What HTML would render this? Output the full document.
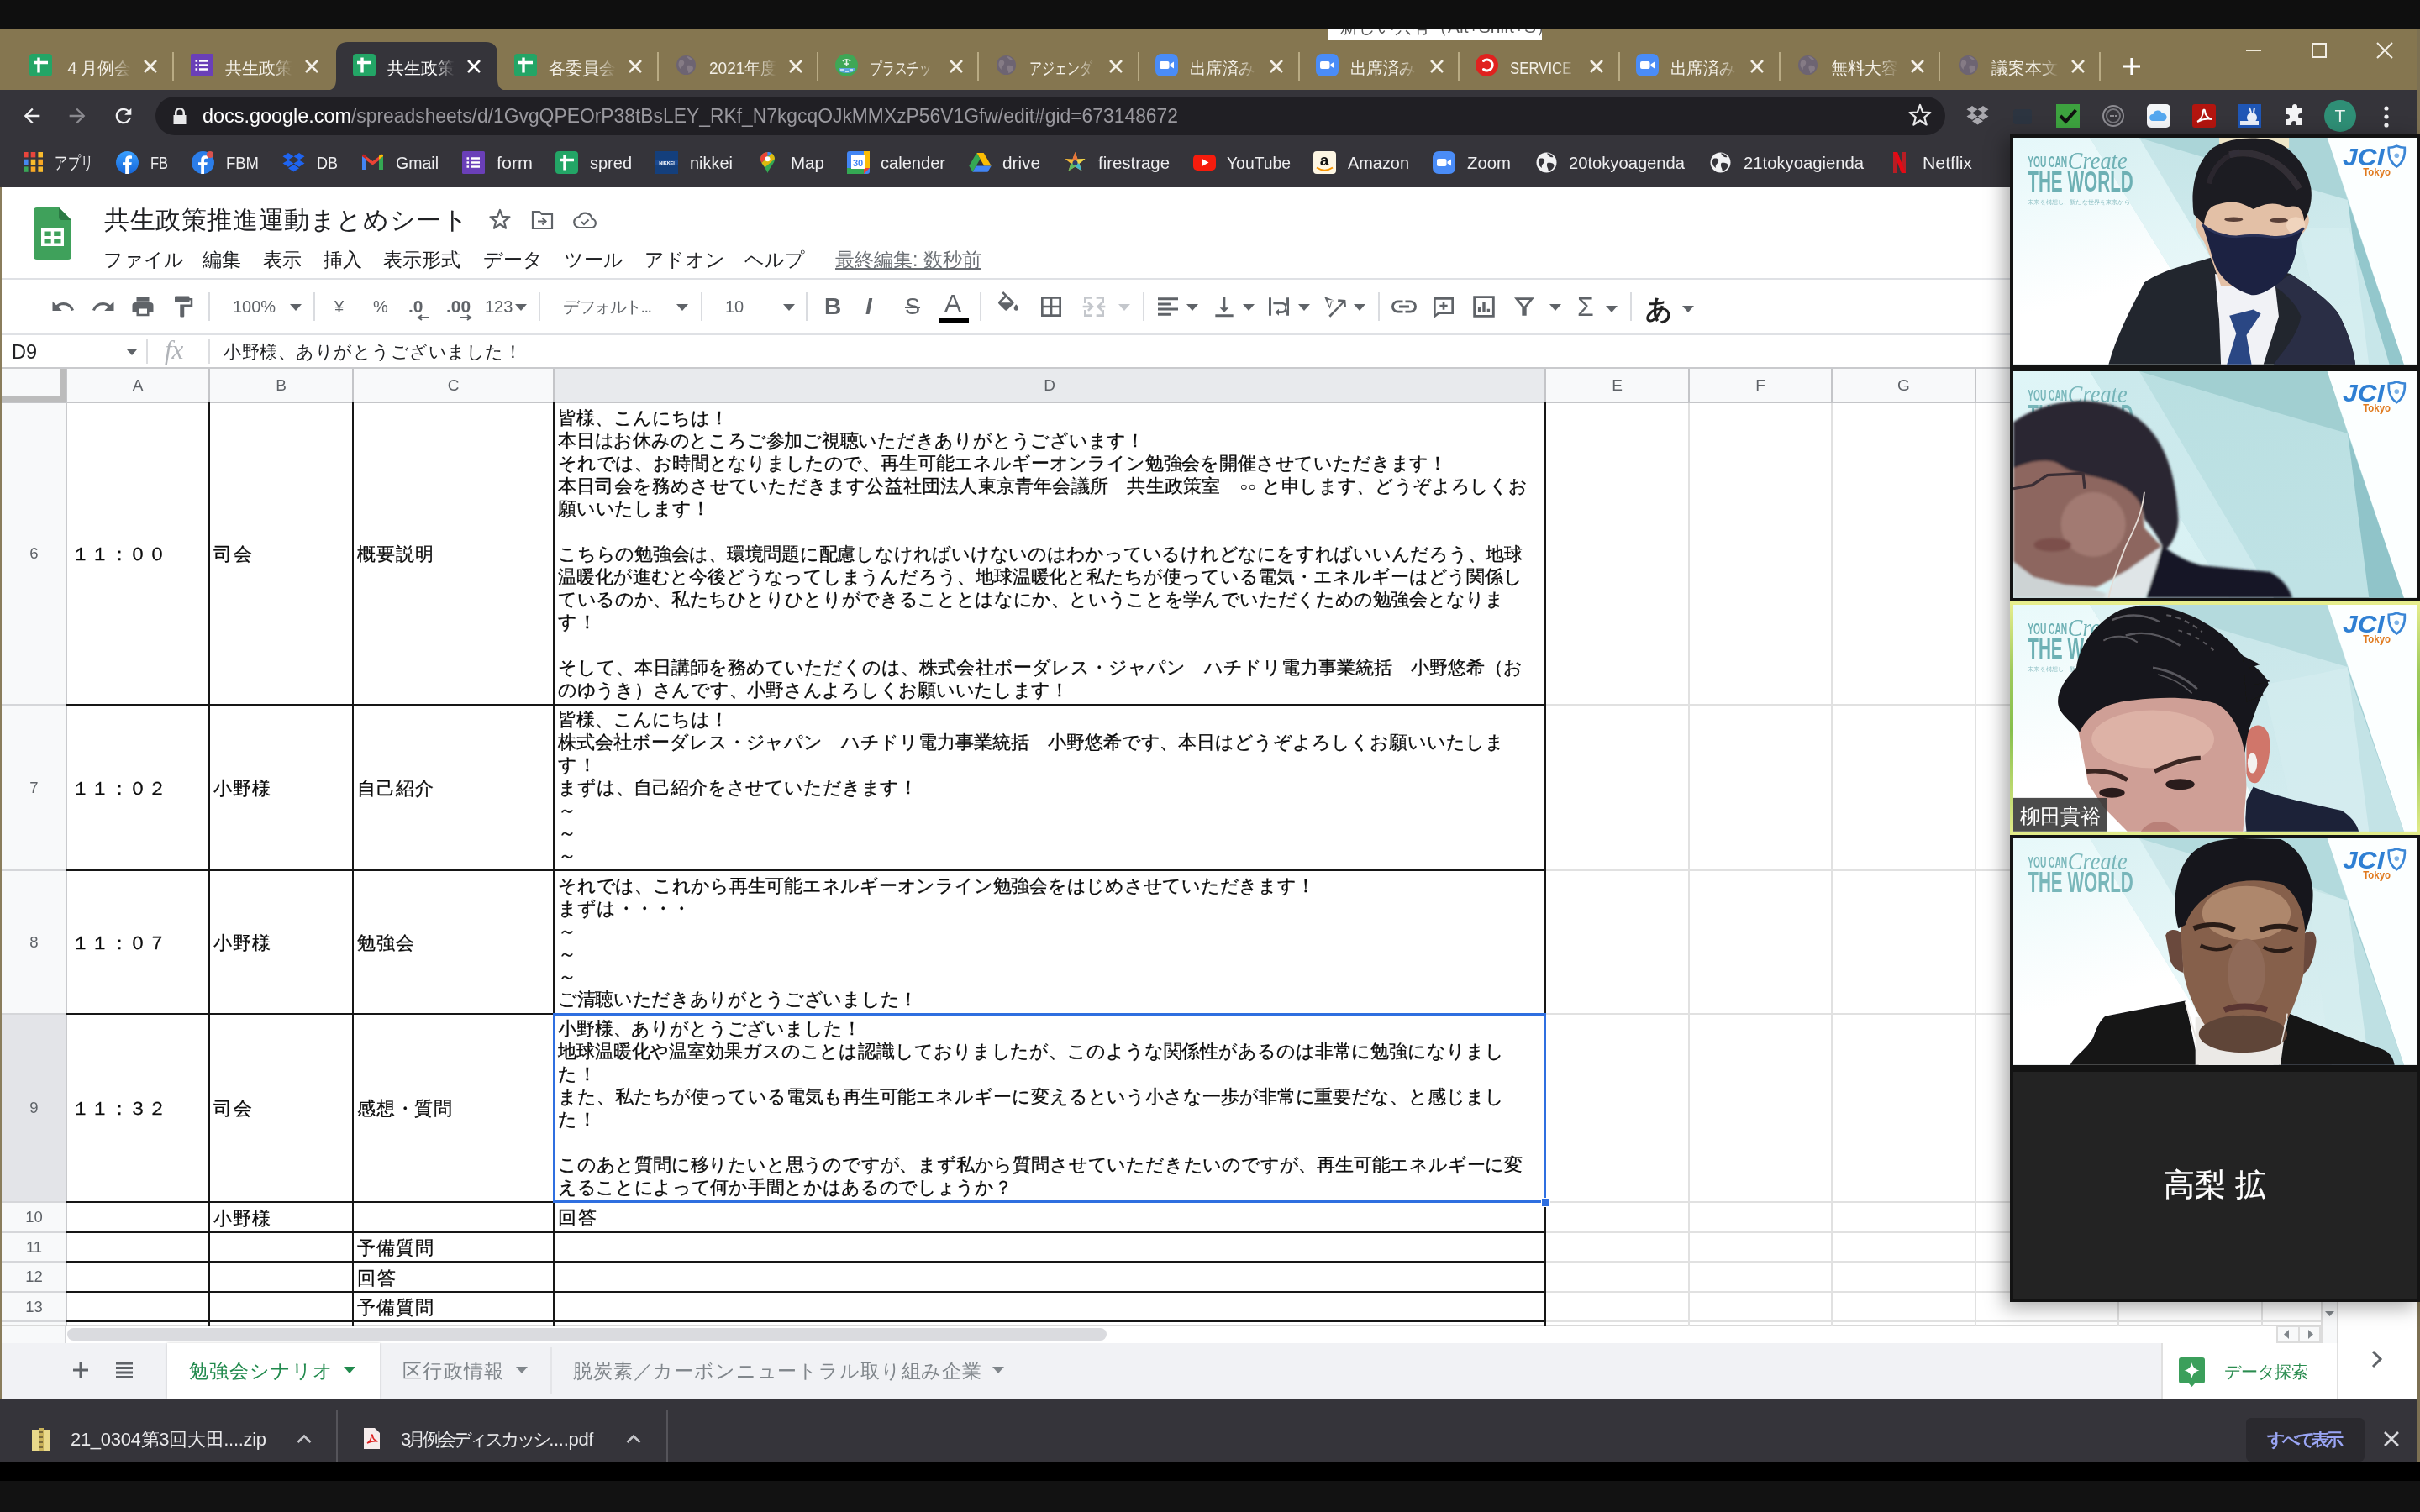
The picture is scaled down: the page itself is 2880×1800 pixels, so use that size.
<!DOCTYPE html>
<html lang="ja"><head><meta charset="utf-8"><title>共生政策推進運動まとめシート</title><style>
*{box-sizing:border-box;margin:0;padding:0}
html,body{width:2880px;height:1800px;overflow:hidden;background:#111}
body{font-family:"Liberation Sans",sans-serif;position:relative;color:#000}
div,span,svg{position:absolute}
.t{white-space:nowrap;line-height:1}
.tab{font-size:20px;color:#f3efe6;top:68px;height:26px;line-height:26px;overflow:hidden;width:80px;white-space:nowrap}
.bm{font-size:20.5px;color:#eeeef0;top:181px;height:26px;line-height:26px;white-space:nowrap}
.menu{font-size:23px;color:#202124;top:295px;height:28px;line-height:28px;white-space:nowrap}
.cell{font-size:22.5px;line-height:27px;color:#0c0c0c;-webkit-text-stroke:0.3px #0c0c0c;white-space:nowrap}
.rh{font-size:18.5px;color:#5f6368;text-align:center;left:2px;width:77px;height:24px;line-height:24px}
.ch{font-size:19px;color:#5f6368;text-align:center;top:447px;height:24px;line-height:24px}
.hl{background:#161616;height:2px}
.vl{background:#161616;width:2px}
.gh{background:#e1e1e1;height:2px}
.gv{background:#e1e1e1;width:2px}

.j{text-align:justify;text-align-last:justify;text-justify:inter-character;letter-spacing:-0.7px}
.sep{background:#dadce0;width:2px;top:348px;height:34px}
</style></head><body><div id="root" style="left:0;top:0;width:2880px;height:1800px;overflow:hidden;filter:blur(0.55px)">
<div style="left:0;top:0;width:2880px;height:34px;background:#0f0f0f"></div>
<div style="left:0;top:34px;width:2880px;height:73px;background:#857650"></div>
<div style="left:1581px;top:34px;width:254px;height:14px;background:#fff;overflow:hidden"><span class="t" style="left:14px;top:-13px;font-size:21px;color:#555">新しい共有（Alt+Shift+S）</span></div>
<div style="left:0;top:107px;width:2876px;height:116px;background:#35343a"></div>
<svg style="left:386px;top:50px" width="220" height="58" viewBox="0 0 220 58"><path d="M0 58 C10 58 14 54 14 44 L14 14 C14 5 19 0 28 0 L192 0 C201 0 206 5 206 14 L206 44 C206 54 210 58 220 58 Z" fill="#35343a"/></svg>
<svg style="left:35.0px;top:64.0px" width="27" height="27" viewBox="0 0 27 27" ><rect x="0" y="0" width="27" height="27" rx="4" fill="#23a566"/><path d="M5 10.5H22M11 4.5V22.5" stroke="#fff" stroke-width="3.4" fill="none"/></svg>
<div class="tab" style="left:76.0px;color:#f3efe6"><span style="left:0;top:0;transform-origin:0 50%;transform:scaleX(1)">４月例会</span><span style="right:0;top:0;width:24px;height:26px;background:linear-gradient(90deg,rgba(133,118,80,0),#857650)"></span></div>
<svg style="left:170.0px;top:70.0px" width="18" height="18" viewBox="0 0 18 18" ><path d="M2 2L16 16M16 2L2 16" stroke="#f3efe6" stroke-width="2.6" fill="none"/></svg>
<div style="left:204.5px;top:62px;width:2px;height:34px;background:#b9ab84"></div>
<svg style="left:227.4px;top:64.0px" width="27" height="27" viewBox="0 0 27 27" ><rect x="0" y="0" width="27" height="27" rx="1.5" fill="#6a3fb8"/><path d="M10 8.5h11M10 13.5h11M10 18.5h11" stroke="#fff" stroke-width="2.6"/><path d="M5.5 8.5h2.6M5.5 13.5h2.6M5.5 18.5h2.6" stroke="#fff" stroke-width="2.6"/></svg>
<div class="tab" style="left:268.4px;color:#f3efe6"><span style="left:0;top:0;transform-origin:0 50%;transform:scaleX(1)">共生政策</span><span style="right:0;top:0;width:24px;height:26px;background:linear-gradient(90deg,rgba(133,118,80,0),#857650)"></span></div>
<svg style="left:362.4px;top:70.0px" width="18" height="18" viewBox="0 0 18 18" ><path d="M2 2L16 16M16 2L2 16" stroke="#f3efe6" stroke-width="2.6" fill="none"/></svg>
<svg style="left:419.8px;top:64.0px" width="27" height="27" viewBox="0 0 27 27" ><rect x="0" y="0" width="27" height="27" rx="4" fill="#23a566"/><path d="M5 10.5H22M11 4.5V22.5" stroke="#fff" stroke-width="3.4" fill="none"/></svg>
<div class="tab" style="left:460.8px;color:#ffffff"><span style="left:0;top:0;transform-origin:0 50%;transform:scaleX(1)">共生政策</span><span style="right:0;top:0;width:24px;height:26px;background:linear-gradient(90deg,rgba(53,52,58,0),#35343a)"></span></div>
<svg style="left:554.8px;top:70.0px" width="18" height="18" viewBox="0 0 18 18" ><path d="M2 2L16 16M16 2L2 16" stroke="#fff" stroke-width="2.6" fill="none"/></svg>
<svg style="left:612.2px;top:64.0px" width="27" height="27" viewBox="0 0 27 27" ><rect x="0" y="0" width="27" height="27" rx="4" fill="#23a566"/><path d="M5 10.5H22M11 4.5V22.5" stroke="#fff" stroke-width="3.4" fill="none"/></svg>
<div class="tab" style="left:653.2px;color:#f3efe6"><span style="left:0;top:0;transform-origin:0 50%;transform:scaleX(1)">各委員会</span><span style="right:0;top:0;width:24px;height:26px;background:linear-gradient(90deg,rgba(133,118,80,0),#857650)"></span></div>
<svg style="left:747.2px;top:70.0px" width="18" height="18" viewBox="0 0 18 18" ><path d="M2 2L16 16M16 2L2 16" stroke="#f3efe6" stroke-width="2.6" fill="none"/></svg>
<div style="left:781.7px;top:62px;width:2px;height:34px;background:#b9ab84"></div>
<svg style="left:802.9px;top:64.0px" width="27" height="27" viewBox="0 0 27 27" ><circle cx="13.5" cy="13.5" r="11.5" fill="#6d6472"/><path d="M6 8c4-1 6 1 5 4s-4 3-3 7c-3-2-5-7-2-11zM15 14c3-1 7 0 7 3s-4 6-6 6c1-3-3-5-1-9zM14 3c3 0 6 2 7 4-3 1-5-1-7-4z" fill="#857b85"/></svg>
<div class="tab" style="left:843.9px;color:#f3efe6"><span style="left:0;top:0;transform-origin:0 50%;transform:scaleX(0.95)">2021年度</span><span style="right:0;top:0;width:24px;height:26px;background:linear-gradient(90deg,rgba(133,118,80,0),#857650)"></span></div>
<svg style="left:937.9px;top:70.0px" width="18" height="18" viewBox="0 0 18 18" ><path d="M2 2L16 16M16 2L2 16" stroke="#f3efe6" stroke-width="2.6" fill="none"/></svg>
<div style="left:972.4px;top:62px;width:2px;height:34px;background:#b9ab84"></div>
<svg style="left:993.6px;top:64.0px" width="27" height="27" viewBox="0 0 27 27" ><circle cx="13.5" cy="13.5" r="13.5" fill="#3fa756"/><path d="M4 17h19v3c-3 4-16 4-19 0z" fill="#5aa6dd"/><path d="M9 9c2-3 7-3 9 0M11 12h5M13.500 7v7" stroke="#e9f6ea" stroke-width="1.600" fill="none"/><path d="M6 19h4M12 21h4M17 19h4" stroke="#e6f2fb" stroke-width="1.500"/></svg>
<div class="tab" style="left:1034.6px;color:#f3efe6"><span style="left:0;top:0;transform-origin:0 50%;transform:scaleX(0.74)">プラスチッ</span><span style="right:0;top:0;width:24px;height:26px;background:linear-gradient(90deg,rgba(133,118,80,0),#857650)"></span></div>
<svg style="left:1128.6px;top:70.0px" width="18" height="18" viewBox="0 0 18 18" ><path d="M2 2L16 16M16 2L2 16" stroke="#f3efe6" stroke-width="2.6" fill="none"/></svg>
<div style="left:1163.1px;top:62px;width:2px;height:34px;background:#b9ab84"></div>
<svg style="left:1184.3px;top:64.0px" width="27" height="27" viewBox="0 0 27 27" ><circle cx="13.5" cy="13.5" r="11.5" fill="#6d6472"/><path d="M6 8c4-1 6 1 5 4s-4 3-3 7c-3-2-5-7-2-11zM15 14c3-1 7 0 7 3s-4 6-6 6c1-3-3-5-1-9zM14 3c3 0 6 2 7 4-3 1-5-1-7-4z" fill="#857b85"/></svg>
<div class="tab" style="left:1225.3px;color:#f3efe6"><span style="left:0;top:0;transform-origin:0 50%;transform:scaleX(0.75)">アジェンダ</span><span style="right:0;top:0;width:24px;height:26px;background:linear-gradient(90deg,rgba(133,118,80,0),#857650)"></span></div>
<svg style="left:1319.3px;top:70.0px" width="18" height="18" viewBox="0 0 18 18" ><path d="M2 2L16 16M16 2L2 16" stroke="#f3efe6" stroke-width="2.6" fill="none"/></svg>
<div style="left:1353.8px;top:62px;width:2px;height:34px;background:#b9ab84"></div>
<svg style="left:1375.0px;top:64.0px" width="27" height="27" viewBox="0 0 27 27" ><rect x="0" y="0" width="27" height="27" rx="7" fill="#4a8cf7"/><rect x="5" y="9" width="11.5" height="9" rx="2" fill="#fff"/><path d="M17.500 12.500l4.500-3v8l-4.500-3z" fill="#fff"/></svg>
<div class="tab" style="left:1416.0px;color:#f3efe6"><span style="left:0;top:0;transform-origin:0 50%;transform:scaleX(0.97)">出席済み</span><span style="right:0;top:0;width:24px;height:26px;background:linear-gradient(90deg,rgba(133,118,80,0),#857650)"></span></div>
<svg style="left:1510.0px;top:70.0px" width="18" height="18" viewBox="0 0 18 18" ><path d="M2 2L16 16M16 2L2 16" stroke="#f3efe6" stroke-width="2.6" fill="none"/></svg>
<div style="left:1544.5px;top:62px;width:2px;height:34px;background:#b9ab84"></div>
<svg style="left:1565.7px;top:64.0px" width="27" height="27" viewBox="0 0 27 27" ><rect x="0" y="0" width="27" height="27" rx="7" fill="#4a8cf7"/><rect x="5" y="9" width="11.5" height="9" rx="2" fill="#fff"/><path d="M17.500 12.500l4.500-3v8l-4.500-3z" fill="#fff"/></svg>
<div class="tab" style="left:1606.7px;color:#f3efe6"><span style="left:0;top:0;transform-origin:0 50%;transform:scaleX(0.97)">出席済み</span><span style="right:0;top:0;width:24px;height:26px;background:linear-gradient(90deg,rgba(133,118,80,0),#857650)"></span></div>
<svg style="left:1700.7px;top:70.0px" width="18" height="18" viewBox="0 0 18 18" ><path d="M2 2L16 16M16 2L2 16" stroke="#f3efe6" stroke-width="2.6" fill="none"/></svg>
<div style="left:1735.2px;top:62px;width:2px;height:34px;background:#b9ab84"></div>
<svg style="left:1756.4px;top:64.0px" width="27" height="27" viewBox="0 0 27 27" ><circle cx="13.5" cy="13.5" r="13.5" fill="#e0221f"/><path d="M9.500 8.500a6.500 6.500 0 1 1 0 10" stroke="#fff" stroke-width="3" fill="none" stroke-linecap="round"/></svg>
<div class="tab" style="left:1797.4px;color:#f3efe6"><span style="left:0;top:0;transform-origin:0 50%;transform:scaleX(0.84)">SERVICE</span><span style="right:0;top:0;width:24px;height:26px;background:linear-gradient(90deg,rgba(133,118,80,0),#857650)"></span></div>
<svg style="left:1891.4px;top:70.0px" width="18" height="18" viewBox="0 0 18 18" ><path d="M2 2L16 16M16 2L2 16" stroke="#f3efe6" stroke-width="2.6" fill="none"/></svg>
<div style="left:1925.9px;top:62px;width:2px;height:34px;background:#b9ab84"></div>
<svg style="left:1947.1px;top:64.0px" width="27" height="27" viewBox="0 0 27 27" ><rect x="0" y="0" width="27" height="27" rx="7" fill="#4a8cf7"/><rect x="5" y="9" width="11.5" height="9" rx="2" fill="#fff"/><path d="M17.500 12.500l4.500-3v8l-4.500-3z" fill="#fff"/></svg>
<div class="tab" style="left:1988.1px;color:#f3efe6"><span style="left:0;top:0;transform-origin:0 50%;transform:scaleX(0.97)">出席済み</span><span style="right:0;top:0;width:24px;height:26px;background:linear-gradient(90deg,rgba(133,118,80,0),#857650)"></span></div>
<svg style="left:2082.1px;top:70.0px" width="18" height="18" viewBox="0 0 18 18" ><path d="M2 2L16 16M16 2L2 16" stroke="#f3efe6" stroke-width="2.6" fill="none"/></svg>
<div style="left:2116.6px;top:62px;width:2px;height:34px;background:#b9ab84"></div>
<svg style="left:2137.8px;top:64.0px" width="27" height="27" viewBox="0 0 27 27" ><circle cx="13.5" cy="13.5" r="11.5" fill="#6d6472"/><path d="M6 8c4-1 6 1 5 4s-4 3-3 7c-3-2-5-7-2-11zM15 14c3-1 7 0 7 3s-4 6-6 6c1-3-3-5-1-9zM14 3c3 0 6 2 7 4-3 1-5-1-7-4z" fill="#857b85"/></svg>
<div class="tab" style="left:2178.8px;color:#f3efe6"><span style="left:0;top:0;transform-origin:0 50%;transform:scaleX(1)">無料大容</span><span style="right:0;top:0;width:24px;height:26px;background:linear-gradient(90deg,rgba(133,118,80,0),#857650)"></span></div>
<svg style="left:2272.8px;top:70.0px" width="18" height="18" viewBox="0 0 18 18" ><path d="M2 2L16 16M16 2L2 16" stroke="#f3efe6" stroke-width="2.6" fill="none"/></svg>
<div style="left:2307.3px;top:62px;width:2px;height:34px;background:#b9ab84"></div>
<svg style="left:2328.5px;top:64.0px" width="27" height="27" viewBox="0 0 27 27" ><circle cx="13.5" cy="13.5" r="11.5" fill="#6d6472"/><path d="M6 8c4-1 6 1 5 4s-4 3-3 7c-3-2-5-7-2-11zM15 14c3-1 7 0 7 3s-4 6-6 6c1-3-3-5-1-9zM14 3c3 0 6 2 7 4-3 1-5-1-7-4z" fill="#857b85"/></svg>
<div class="tab" style="left:2369.5px;color:#f3efe6"><span style="left:0;top:0;transform-origin:0 50%;transform:scaleX(1)">議案本文</span><span style="right:0;top:0;width:24px;height:26px;background:linear-gradient(90deg,rgba(133,118,80,0),#857650)"></span></div>
<svg style="left:2463.5px;top:70.0px" width="18" height="18" viewBox="0 0 18 18" ><path d="M2 2L16 16M16 2L2 16" stroke="#f3efe6" stroke-width="2.6" fill="none"/></svg>
<div style="left:2498.0px;top:62px;width:2px;height:34px;background:#b9ab84"></div>
<svg style="left:2526px;top:68px" width="22" height="22"><path d="M11 1v20M1 11h20" stroke="#fff" stroke-width="3.2" fill="none"/></svg>
<div style="left:2673px;top:59px;width:18px;height:2px;background:#efe9d8"></div>
<div style="left:2751px;top:51px;width:18px;height:18px;border:2px solid #f3efe6"></div>
<svg style="left:2827.0px;top:49.0px" width="22" height="22" viewBox="0 0 22 22" ><path d="M2 2L20 20M20 2L2 20" stroke="#f3efe6" stroke-width="2" fill="none"/></svg>
<div style="left:2876px;top:34px;width:4px;height:1706px;background:#7c7052"></div>
<svg style="left:24px;top:124px" width="28" height="28" viewBox="0 0 24 24"><path d="M20 11H7.8l5.6-5.6L12 4l-8 8 8 8 1.4-1.4L7.8 13H20z" fill="#f1f1f3"/></svg>
<svg style="left:78px;top:124px" width="28" height="28" viewBox="0 0 24 24"><path d="M4 11h12.2l-5.6-5.6L12 4l8 8-8 8-1.4-1.4 5.6-5.6H4z" fill="#8b8a90"/></svg>
<svg style="left:133px;top:124px" width="28" height="28" viewBox="0 0 24 24"><path d="M17.65 6.35A7.95 7.95 0 0 0 12 4a8 8 0 1 0 7.73 10h-2.08A6 6 0 1 1 12 6c1.66 0 3.14.69 4.22 1.78L13 11h7V4z" fill="#f1f1f3"/></svg>
<div style="left:185px;top:115px;width:2130px;height:46px;border-radius:23px;background:#201f24"></div>
<svg style="left:205px;top:127px" width="18" height="24" viewBox="0 0 18 24"><path d="M3 10V7a6 6 0 0 1 12 0v3h1.5v11h-15V10zm2.5 0h7V7a3.5 3.5 0 0 0-7 0z" fill="#e8e8ea"/></svg>
<div class="t" style="left:241px;top:124px;font-size:23.5px;height:29px;line-height:29px;color:#ffffff;font-weight:normal;font-style:normal;transform-origin:0 50%;transform:scaleX(0.9962);">docs.google.com</div>
<div class="t" style="left:418px;top:124px;font-size:23.5px;height:29px;line-height:29px;color:#9a999f;font-weight:normal;font-style:normal;transform-origin:0 50%;transform:scaleX(0.9726);">/spreadsheets/d/1GvgQPEOrP38tBsLEY_RKf_N7kgcqOJkMMXzP56V1Gfw/edit#gid=673148672</div>
<svg style="left:2269.0px;top:122.0px" width="32" height="32" viewBox="0 0 32 32" ><polygon points="16.00,3.00 19.21,11.58 28.36,11.98 21.19,17.69 23.64,26.52 16.00,21.46 8.36,26.52 10.81,17.69 3.64,11.98 12.79,11.58" fill="none" stroke="#e8e8ea" stroke-width="2.2" stroke-linejoin="round"/></svg>
<svg style="left:2340.0px;top:124.0px" width="27" height="27" viewBox="0 0 27 27" ><path d="M7 2l6.500 4.200L7 10.400.5 6.200zM20 2l6.500 4.200L20 10.400 13.500 6.200zM.5 14.600L7 10.400l6.500 4.200L7 18.800zM20 10.400l6.500 4.200L20 18.800l-6.500-4.200zM7 20.200l6.500-4.200 6.500 4.200-6.500 4.200z" fill="#a9a8ae"/></svg><svg style="left:2395.0px;top:126.0px" width="24" height="24" viewBox="0 0 24 24" ><rect x="1" y="4" width="22" height="18" rx="3" fill="#2c3440"/></svg><svg style="left:2447.0px;top:124.0px" width="28" height="28" viewBox="0 0 28 28" ><rect width="28" height="28" fill="#3da23f"/><path d="M5 14l6.500 6.500L23.500 7" stroke="#101010" stroke-width="4" fill="none"/></svg><svg style="left:2501.0px;top:124.0px" width="28" height="28" viewBox="0 0 28 28" ><circle cx="14" cy="14" r="12" fill="none" stroke="#8d8c92" stroke-width="2"/><circle cx="14" cy="14" r="8" fill="none" stroke="#77767c" stroke-width="2"/><path d="M10 14h8" stroke="#8d8c92" stroke-width="2" stroke-dasharray="2 1"/></svg><svg style="left:2555.0px;top:124.0px" width="28" height="28" viewBox="0 0 28 28" ><rect width="28" height="28" rx="5" fill="#f4f6f8"/><path d="M7 20a4 4 0 0 1 .5-8 5.500 5.500 0 0 1 10.500-1 4.500 4.500 0 0 1 2 9z" fill="#55a7ee"/></svg><svg style="left:2609.0px;top:124.0px" width="28" height="28" viewBox="0 0 28 28" ><rect width="28" height="28" rx="3" fill="#b3150f"/><path d="M6 21c4-2 7-8 7-13 0-2 2-2 2 0 0 5 4 9 8 10-5-1-11 0-17 3z" stroke="#fff" stroke-width="2" fill="none"/></svg><svg style="left:2663.0px;top:124.0px" width="28" height="28" viewBox="0 0 28 28" ><rect width="28" height="28" fill="#1f56b5"/><path d="M3 20h22v5H3z" fill="#e8eef8"/><circle cx="17" cy="16" r="6" fill="#e8eef8"/><path d="M14 4l2 6M20 4l-1 6" stroke="#e8eef8" stroke-width="2"/></svg><svg style="left:2717.0px;top:124.0px" width="28" height="28" viewBox="0 0 28 28" ><path d="M11 3a3 3 0 0 1 6 0v2h6v6h-2a3 3 0 0 0 0 6h2v8h-7v-2a3 3 0 0 0-6 0v2H3v-7h2a3 3 0 0 0 0-6H3V5h8z" fill="#f4f4f6"/></svg><div style="left:2766px;top:119px;width:38px;height:38px;border-radius:19px;background:#2f8f76;color:#e9f3ef;font-size:21px;text-align:center;line-height:38px">T</div><svg style="left:2836.0px;top:126.0px" width="8" height="26" viewBox="0 0 8 26" ><circle cx="4" cy="3" r="2.600" fill="#f1f1f3"/><circle cx="4" cy="13" r="2.600" fill="#f1f1f3"/><circle cx="4" cy="23" r="2.600" fill="#f1f1f3"/></svg>
<svg style="left:27.0px;top:180.0px" width="27" height="27" viewBox="0 0 27 27" ><rect x="1.0" y="1.0" width="5.600" height="6.400" fill="#e8453c"/><rect x="9.7" y="1.0" width="5.600" height="6.400" fill="#e8453c"/><rect x="18.4" y="1.0" width="5.600" height="6.400" fill="#f9bb2d"/><rect x="1.0" y="9.7" width="5.600" height="6.400" fill="#4688f1"/><rect x="9.7" y="9.7" width="5.600" height="6.400" fill="#f9bb2d"/><rect x="18.4" y="9.7" width="5.600" height="6.400" fill="#f9a825"/><rect x="1.0" y="18.4" width="5.600" height="6.400" fill="#3aa757"/><rect x="9.7" y="18.4" width="5.600" height="6.400" fill="#f9a825"/><rect x="18.4" y="18.4" width="5.600" height="6.400" fill="#f9bb2d"/></svg>
<div class="t" style="left:65px;top:180px;font-size:20.5px;height:27px;line-height:27px;color:#eeeef0;font-weight:normal;font-style:normal;transform-origin:0 50%;transform:scaleX(0.7121);">アプリ</div>
<svg style="left:138.0px;top:180.0px" width="27" height="27" viewBox="0 0 27 27" ><defs><linearGradient id="fbg" x1="0" y1="0" x2="0" y2="1"><stop offset="0" stop-color="#3aa0ff"/><stop offset="1" stop-color="#1565d8"/></linearGradient></defs><circle cx="13.5" cy="13.5" r="13.5" fill="url(#fbg)"/><path d="M15 27v-10h3.200l.6-3.800H15v-2.400c0-1.200.6-2 2-2h2V5.400c-.6-.1-1.800-.2-3-.2-3 0-4.800 1.800-4.800 5v3H8v3.800h3.200V27z" fill="#fff"/></svg>
<div class="t" style="left:179px;top:180px;font-size:20.5px;height:27px;line-height:27px;color:#eeeef0;font-weight:normal;font-style:normal;transform-origin:0 50%;transform:scaleX(0.8014);">FB</div>
<svg style="left:228.0px;top:180.0px" width="27" height="27" viewBox="0 0 27 27" ><circle cx="13.5" cy="13.5" r="13.5" fill="#2b7de9"/><path d="M15 27v-10h3.200l.6-3.800H15v-2.400c0-1.200.6-2 2-2h2V5.400c-.6-.1-1.800-.2-3-.2-3 0-4.800 1.800-4.800 5v3H8v3.800h3.200V27z" fill="#fff"/><circle cx="22" cy="4" r="4" fill="#d9534f"/></svg>
<div class="t" style="left:269px;top:180px;font-size:20.5px;height:27px;line-height:27px;color:#eeeef0;font-weight:normal;font-style:normal;transform-origin:0 50%;transform:scaleX(0.9011);">FBM</div>
<svg style="left:336.0px;top:180.0px" width="27" height="27" viewBox="0 0 27 27" ><path d="M7 2l6.500 4.200L7 10.400.5 6.200zM20 2l6.500 4.200L20 10.400 13.500 6.200zM.5 14.600L7 10.400l6.500 4.200L7 18.800zM20 10.400l6.500 4.200L20 18.800l-6.500-4.200zM7 20.200l6.500-4.200 6.500 4.200-6.500 4.200z" fill="#1f64f0"/></svg>
<div class="t" style="left:377px;top:180px;font-size:20.5px;height:27px;line-height:27px;color:#eeeef0;font-weight:normal;font-style:normal;transform-origin:0 50%;transform:scaleX(0.8777);">DB</div>
<svg style="left:430.0px;top:180.0px" width="27" height="27" viewBox="0 0 27 27" ><path d="M1 6v16h5V11l7.500 5.600L21 11v11h5V6l-2.500-1.500L13.500 12 3.500 4.500z" fill="#ea4335"/><path d="M1 6v16h5V9.800z" fill="#4285f4"/><path d="M26 6v16h-5V9.800z" fill="#34a853"/><path d="M21 9.800V5.500l3-1.700c1-.4 2 .3 2 1.500V6z" fill="#fbbc04"/><path d="M6 9.800V5.500L3 3.800C2 3.400 1 4.100 1 5.300V6z" fill="#c5221f"/></svg>
<div class="t" style="left:471px;top:180px;font-size:20.5px;height:27px;line-height:27px;color:#eeeef0;font-weight:normal;font-style:normal;transform-origin:0 50%;transform:scaleX(0.9524);">Gmail</div>
<svg style="left:550.0px;top:180.0px" width="27" height="27" viewBox="0 0 27 27" ><rect x="0" y="0" width="27" height="27" rx="1.5" fill="#6a3fb8"/><path d="M10 8.5h11M10 13.5h11M10 18.5h11" stroke="#fff" stroke-width="2.6"/><path d="M5.5 8.5h2.6M5.5 13.5h2.6M5.5 18.5h2.6" stroke="#fff" stroke-width="2.6"/></svg>
<div class="t" style="left:591px;top:180px;font-size:20.5px;height:27px;line-height:27px;color:#eeeef0;font-weight:normal;font-style:normal;transform-origin:0 50%;transform:scaleX(1.0488);">form</div>
<svg style="left:661.0px;top:180.0px" width="27" height="27" viewBox="0 0 27 27" ><rect x="0" y="0" width="27" height="27" rx="4" fill="#23a566"/><path d="M5 10.5H22M11 4.5V22.5" stroke="#fff" stroke-width="3.4" fill="none"/></svg>
<div class="t" style="left:702px;top:180px;font-size:20.5px;height:27px;line-height:27px;color:#eeeef0;font-weight:normal;font-style:normal;transform-origin:0 50%;transform:scaleX(0.9750);">spred</div>
<svg style="left:780.0px;top:180.0px" width="27" height="27" viewBox="0 0 27 27" ><rect x="0" y="0" width="27" height="27" fill="#143f7c"/><rect x="0" y="11" width="27" height="6" fill="#1b4a92"/><text x="13.500" y="16" font-size="5.500" font-family="Liberation Sans, sans-serif" font-weight="bold" fill="#fff" text-anchor="middle">NIKKEI</text></svg>
<div class="t" style="left:821px;top:180px;font-size:20.5px;height:27px;line-height:27px;color:#eeeef0;font-weight:normal;font-style:normal;transform-origin:0 50%;transform:scaleX(0.9729);">nikkei</div>
<svg style="left:900.0px;top:180.0px" width="27" height="27" viewBox="0 0 27 27" ><path d="M13.500 1C8.500 1 5 4.700 5 9.300c0 5.200 5.500 9.200 8.500 16.700 3-7.500 8.500-11.500 8.500-16.700C22 4.700 18.500 1 13.500 1z" fill="#34a853"/><path d="M13.500 1C8.500 1 5 4.700 5 9.300c0 1.700.6 3.200 1.500 4.700L13.500 6z" fill="#ea4335"/><path d="M13.500 1v5l5.200-3.300C17.300 1.600 15.500 1 13.500 1z" fill="#4285f4"/><path d="M22 9.300c0-2.600-1.200-5-3.300-6.600L6.500 14c1 1.700 2.500 3.300 3.800 5.200z" fill="#fbbc04" opacity=".85"/><circle cx="13.500" cy="9.300" r="3" fill="#fff"/></svg>
<div class="t" style="left:941px;top:180px;font-size:20.5px;height:27px;line-height:27px;color:#eeeef0;font-weight:normal;font-style:normal;transform-origin:0 50%;transform:scaleX(1.0027);">Map</div>
<svg style="left:1008.0px;top:180.0px" width="27" height="27" viewBox="0 0 27 27" ><rect x="0" y="0" width="27" height="27" rx="3" fill="#4285f4"/><rect x="20" y="0" width="7" height="20" fill="#fbbc04"/><rect x="0" y="20" width="20" height="7" fill="#34a853"/><path d="M20 20h7l-7 7z" fill="#ea4335"/><rect x="5" y="5" width="16" height="16" fill="#fff"/><text x="13" y="18" font-size="11" font-family="Liberation Sans, sans-serif" font-weight="bold" fill="#4285f4" text-anchor="middle">30</text></svg>
<div class="t" style="left:1048px;top:180px;font-size:20.5px;height:27px;line-height:27px;color:#eeeef0;font-weight:normal;font-style:normal;transform-origin:0 50%;transform:scaleX(0.9791);">calender</div>
<svg style="left:1153.0px;top:180.0px" width="27" height="27" viewBox="0 0 27 27" ><path d="M9.300 2h8.400l9 15.500h-8.400z" fill="#fbbc04"/><path d="M9.300 2L.3 17.500l4.200 7.200 9-15.500z" fill="#34a853"/><path d="M4.500 24.700h18l4.200-7.200h-18z" fill="#4285f4"/></svg>
<div class="t" style="left:1193px;top:180px;font-size:20.5px;height:27px;line-height:27px;color:#eeeef0;font-weight:normal;font-style:normal;transform-origin:0 50%;transform:scaleX(1.0127);">drive</div>
<svg style="left:1266.0px;top:180.0px" width="27" height="27" viewBox="0 0 27 27" ><path d="M13.500 1l3 8.500 9-.5-7 5.800 3 8.700-8-5-8 5 3-8.700-7-5.800 9 .5z" fill="#f5b93a"/><path d="M13.500 1l3 8.500-3 4.500-3-4.500z" fill="#e8743b"/><path d="M25.500 9l-7 5.800-5-.8 3-4.500z" fill="#ecd64b"/><path d="M21.500 23.500l-8-5 0-4.500 5 .8z" fill="#46b8c9"/><path d="M5.500 23.500l3-8.700 5-.8v4.500z" fill="#5dbb63"/><circle cx="13.500" cy="14" r="3" fill="#2d3d6b"/></svg>
<div class="t" style="left:1307px;top:180px;font-size:20.5px;height:27px;line-height:27px;color:#eeeef0;font-weight:normal;font-style:normal;transform-origin:0 50%;transform:scaleX(0.9945);">firestrage</div>
<svg style="left:1420.0px;top:180.0px" width="27" height="27" viewBox="0 0 27 27" ><rect x="0" y="4" width="27" height="19" rx="5" fill="#f61c0d"/><path d="M10.500 9l8 4.500-8 4.500z" fill="#fff"/></svg>
<div class="t" style="left:1460px;top:180px;font-size:20.5px;height:27px;line-height:27px;color:#eeeef0;font-weight:normal;font-style:normal;transform-origin:0 50%;transform:scaleX(0.9434);">YouTube</div>
<svg style="left:1563.0px;top:180.0px" width="27" height="27" viewBox="0 0 27 27" ><rect x="0" y="0" width="27" height="27" rx="4" fill="#fdf6e3"/><text x="13" y="17" font-size="19" font-family="Liberation Sans, sans-serif" font-weight="bold" fill="#111" text-anchor="middle">a</text><path d="M4 19.500c6 4 13 4 19 0" stroke="#f79400" stroke-width="2" fill="none"/></svg>
<div class="t" style="left:1604px;top:180px;font-size:20.5px;height:27px;line-height:27px;color:#eeeef0;font-weight:normal;font-style:normal;transform-origin:0 50%;transform:scaleX(0.9705);">Amazon</div>
<svg style="left:1705.0px;top:180.0px" width="27" height="27" viewBox="0 0 27 27" ><rect x="0" y="0" width="27" height="27" rx="7" fill="#4a8cf7"/><rect x="5" y="9" width="11.5" height="9" rx="2" fill="#fff"/><path d="M17.500 12.500l4.500-3v8l-4.500-3z" fill="#fff"/></svg>
<div class="t" style="left:1746px;top:180px;font-size:20.5px;height:27px;line-height:27px;color:#eeeef0;font-weight:normal;font-style:normal;transform-origin:0 50%;transform:scaleX(0.9922);">Zoom</div>
<svg style="left:1827.0px;top:180.0px" width="27" height="27" viewBox="0 0 27 27" ><circle cx="13.5" cy="13.5" r="12" fill="#f1f1f3"/><path d="M5 9c4-1.5 7 .5 6 3.500s-4 3-3 7.500c-3.500-2-5.500-7-3-11zM14.500 14c3-1 8 0 8 3s-4 6.500-7 7c1-3.500-3-5.500-1-10zM14 2.500c3 0 6.500 2 7.500 4.500-3 1-5.500-1-7.500-4.500z" fill="#35343a"/></svg>
<div class="t" style="left:1867px;top:180px;font-size:20.5px;height:27px;line-height:27px;color:#eeeef0;font-weight:normal;font-style:normal;transform-origin:0 50%;transform:scaleX(0.9842);">20tokyoagenda</div>
<svg style="left:2034.0px;top:180.0px" width="27" height="27" viewBox="0 0 27 27" ><circle cx="13.5" cy="13.5" r="12" fill="#f1f1f3"/><path d="M5 9c4-1.5 7 .5 6 3.500s-4 3-3 7.500c-3.500-2-5.500-7-3-11zM14.500 14c3-1 8 0 8 3s-4 6.500-7 7c1-3.500-3-5.500-1-10zM14 2.500c3 0 6.500 2 7.500 4.500-3 1-5.500-1-7.500-4.500z" fill="#35343a"/></svg>
<div class="t" style="left:2075px;top:180px;font-size:20.5px;height:27px;line-height:27px;color:#eeeef0;font-weight:normal;font-style:normal;transform-origin:0 50%;transform:scaleX(0.9878);">21tokyoagienda</div>
<svg style="left:2247.0px;top:180.0px" width="27" height="27" viewBox="0 0 27 27" ><path d="M6 1h5l5 14V1h5v25h-5L11 12v14H6z" fill="#b81d24"/><path d="M6 1h5l10 25h-5z" fill="#e50914"/></svg>
<div class="t" style="left:2288px;top:180px;font-size:20.5px;height:27px;line-height:27px;color:#eeeef0;font-weight:normal;font-style:normal;transform-origin:0 50%;transform:scaleX(1.0357);">Netflix</div>
<div style="left:2px;top:223px;width:2874px;height:1442px;background:#fff"></div>
<div style="left:0;top:223px;width:2px;height:1517px;background:#8a7d5c"></div>
<svg style="left:40px;top:247px" width="45" height="62" viewBox="0 0 45 62"><path d="M4 0h26l15 15v43a4 4 0 0 1-4 4H4a4 4 0 0 1-4-4V4a4 4 0 0 1 4-4z" fill="#3fa15b"/><path d="M30 0l15 15H34a4 4 0 0 1-4-4z" fill="#2c7a45"/><path d="M9 25h27v21H9zm3.500 3.500v5.500h8.200v-5.500zm11.700 0v5.500h8.300v-5.500zm-11.700 8.500v5.500h8.200V37zm11.700 0v5.500h8.300V37z" fill="#fff" fill-rule="evenodd"/></svg>
<div class="t" style="left:124px;top:244px;font-size:30px;letter-spacing:0.6px;height:36px;line-height:36px;color:#202124">共生政策推進運動まとめシート</div>
<svg style="left:580.0px;top:247.0px" width="30" height="30" viewBox="0 0 30 30" ><polygon points="15.00,3.00 17.96,10.92 26.41,11.29 19.79,16.56 22.05,24.71 15.00,20.04 7.95,24.71 10.21,16.56 3.59,11.29 12.04,10.92" fill="none" stroke="#5f6368" stroke-width="2.2" stroke-linejoin="round"/></svg>
<svg style="left:632px;top:250px" width="27" height="24" viewBox="0 0 27 24"><path d="M2 2h8l3 3h12v17H2z" fill="none" stroke="#5f6368" stroke-width="2.200"/><path d="M8 13.500h9M13.500 9.500l4 4-4 4" fill="none" stroke="#5f6368" stroke-width="2.200"/></svg>
<svg style="left:682px;top:251px" width="29" height="22" viewBox="0 0 29 22"><path d="M8 20a6.500 6.500 0 0 1-.5-13 8 8 0 0 1 15 2.500A5.300 5.300 0 0 1 22 20z" fill="none" stroke="#5f6368" stroke-width="2.200"/><path d="M10 13l3 3 5.500-5.500" fill="none" stroke="#5f6368" stroke-width="2.200"/></svg>
<div class="menu" style="left:123px">ファイル</div>
<div class="menu" style="left:241px">編集</div>
<div class="menu" style="left:313px">表示</div>
<div class="menu" style="left:385px">挿入</div>
<div class="menu" style="left:456px">表示形式</div>
<div class="menu" style="left:575px">データ</div>
<div class="menu" style="left:671px">ツール</div>
<div class="menu" style="left:767px">アドオン</div>
<div class="menu" style="left:886px">ヘルプ</div>
<div class="menu" style="left:994px;color:#6b6f74;text-decoration:underline;font-size:23px;letter-spacing:0">最終編集: 数秒前</div>
<div style="left:2px;top:331px;width:2874px;height:2px;background:#dfe1e5"></div>
<svg style="left:60.0px;top:350.0px" width="30" height="30" viewBox="0 0 24 24" ><path d="M12.500 8c-2.650 0-5.050.99-6.900 2.600L2 7v9h9l-3.620-3.620A8 8 0 0 1 20.100 16l2.370-.78A10.500 10.500 0 0 0 12.500 8z" fill="#5f6368"/></svg><svg style="left:108.0px;top:350.0px" width="30" height="30" viewBox="0 0 24 24" ><path d="M18.400 10.600A10.400 10.400 0 0 0 11.500 8a10.500 10.500 0 0 0-9.970 7.220L3.900 16a8 8 0 0 1 12.720-3.620L13 16h9V7z" fill="#5f6368"/></svg><svg style="left:155.0px;top:350.0px" width="30" height="30" viewBox="0 0 24 24" ><path d="M19 8H5a3 3 0 0 0-3 3v6h4v4h12v-4h4v-6a3 3 0 0 0-3-3zm-3 11H8v-5h8zM18 3H6v4h12z" fill="#5f6368"/></svg><svg style="left:203.0px;top:350.0px" width="30" height="30" viewBox="0 0 24 24" ><path d="M18 4V3a1 1 0 0 0-1-1H5a1 1 0 0 0-1 1v4a1 1 0 0 0 1 1h12a1 1 0 0 0 1-1V6h1v4H9v11a1 1 0 0 0 1 1h2a1 1 0 0 0 1-1v-9h8V4z" fill="#5f6368"/></svg><div class="sep" style="left:248px"></div><div class="t" style="left:277px;top:352px;font-size:20px;height:26px;line-height:26px;color:#5f6368;">100%</div><svg style="left:345.0px;top:362.0px" width="14" height="8" viewBox="0 0 14 8" ><path d="M0 0h14l-7 8z" fill="#5f6368"/></svg><div class="sep" style="left:373px"></div><div class="t" style="left:398px;top:352px;font-size:20px;height:26px;line-height:26px;color:#5f6368;">¥</div><div class="t" style="left:444px;top:352px;font-size:20px;height:26px;line-height:26px;color:#5f6368;">%</div><div class="t" style="left:486px;top:352px;font-size:21px;height:26px;line-height:26px;color:#5f6368;font-weight:bold;">.0</div><div class="t" style="left:531px;top:352px;font-size:21px;height:26px;line-height:26px;color:#5f6368;font-weight:bold;">.00</div><svg style="left:496.0px;top:374.0px" width="14" height="8" viewBox="0 0 14 8" ><path d="M14 4H3M6 1L2 4l4 3" stroke="#5f6368" stroke-width="2" fill="none"/></svg><svg style="left:548.0px;top:374.0px" width="14" height="8" viewBox="0 0 14 8" ><path d="M0 4h11M8 1l4 3-4 3" stroke="#5f6368" stroke-width="2" fill="none"/></svg><div class="t" style="left:577px;top:352px;font-size:20px;height:26px;line-height:26px;color:#5f6368;">123</div><svg style="left:613.0px;top:362.0px" width="14" height="8" viewBox="0 0 14 8" ><path d="M0 0h14l-7 8z" fill="#5f6368"/></svg><div class="sep" style="left:641px"></div><div class="t" style="left:670px;top:352px;font-size:20px;height:26px;line-height:26px;color:#5f6368;letter-spacing:-1.500px;">デフォルト...</div><svg style="left:805.0px;top:362.0px" width="14" height="8" viewBox="0 0 14 8" ><path d="M0 0h14l-7 8z" fill="#5f6368"/></svg><div class="sep" style="left:834px"></div><div class="t" style="left:863px;top:352px;font-size:20px;height:26px;line-height:26px;color:#5f6368;">10</div><svg style="left:932.0px;top:362.0px" width="14" height="8" viewBox="0 0 14 8" ><path d="M0 0h14l-7 8z" fill="#5f6368"/></svg><div class="sep" style="left:959px"></div><div class="t" style="left:981px;top:348px;font-size:28px;font-weight:bold;height:34px;line-height:34px;color:#5f6368">B</div><div class="t" style="left:1030px;top:348px;font-size:28px;font-style:italic;font-weight:bold;height:34px;line-height:34px;color:#5f6368">I</div><div class="t" style="left:1077px;top:348px;font-size:27px;text-decoration:line-through;height:34px;line-height:34px;color:#5f6368">S</div><div class="t" style="left:1124px;top:344px;font-size:30px;height:34px;line-height:34px;color:#5f6368">A</div><div style="left:1117px;top:378px;width:36px;height:7px;background:#000"></div><div class="sep" style="left:1166px"></div><svg style="left:1184.0px;top:347.0px" width="32" height="32" viewBox="0 0 24 24" ><path d="M16.560 8.940L7.620 0 6.210 1.410l2.380 2.380-5.150 5.150a1.490 1.490 0 0 0 0 2.120l5.500 5.500c.29.290.68.440 1.060.440s.77-.150 1.060-.440l5.500-5.500c.590-.580.590-1.530 0-2.120zM5.210 10L10 5.210 14.790 10zM19 11.500s-2 2.170-2 3.500c0 1.100.9 2 2 2s2-.9 2-2c0-1.330-2-3.500-2-3.500z" fill="#5f6368"/></svg><svg style="left:1235.0px;top:349.0px" width="32" height="32" viewBox="0 0 24 24" ><path d="M3 3v18h18V3zm8 16H5v-6h6zm0-8H5V5h6zm8 8h-6v-6h6zm0-8h-6V5h6z" fill="#5f6368"/></svg><svg style="left:1286.0px;top:349.0px" width="32" height="32" viewBox="0 0 24 24" ><path d="M3 3h7v2H5v4H3zm11 0h7v6h-2V5h-5zM3 15h2v4h5v2H3zm16 0h2v6h-7v-2h5zM2 11h6l-2-2 1.400-1.400L12 12l-4.600 4.400L6 15l2-2H2zm20 0h-4l2-2-1.400-1.400L14 12l4.600 4.400L20 15l-2-2h4z" fill="#c4c7cc"/></svg><svg style="left:1331.0px;top:362.0px" width="14" height="8" viewBox="0 0 14 8" ><path d="M0 0h14l-7 8z" fill="#c4c7cc"/></svg><div class="sep" style="left:1360px"></div><svg style="left:1374.0px;top:349.0px" width="32" height="32" viewBox="0 0 24 24" ><path d="M3 4h18v2.200H3zm0 4.600h12v2.200H3zm0 4.600h18v2.200H3zm0 4.600h12V20H3z" fill="#5f6368"/></svg><svg style="left:1412.0px;top:362.0px" width="14" height="8" viewBox="0 0 14 8" ><path d="M0 0h14l-7 8z" fill="#5f6368"/></svg><svg style="left:1441.0px;top:349.0px" width="32" height="32" viewBox="0 0 24 24" ><path d="M11 3h2v10h3l-4 4-4-4h3zM4 19h16v2.200H4z" fill="#5f6368"/></svg><svg style="left:1479.0px;top:362.0px" width="14" height="8" viewBox="0 0 14 8" ><path d="M0 0h14l-7 8z" fill="#5f6368"/></svg><svg style="left:1506.0px;top:349.0px" width="32" height="32" viewBox="0 0 24 24" ><path d="M3 4h2.200v16H3zm15.800 0H21v16h-2.200zM7 10h7.500a3 3 0 0 1 0 6H12v-2l-3.500 3 3.500 3v-2h2.500a5 5 0 0 0 0-10H7z" fill="#5f6368"/></svg><svg style="left:1545.0px;top:362.0px" width="14" height="8" viewBox="0 0 14 8" ><path d="M0 0h14l-7 8z" fill="#5f6368"/></svg><svg style="left:1572.0px;top:349.0px" width="32" height="32" viewBox="0 0 24 24" ><path d="M3 3l9 3.500-2.200.8L8 14zm2.800 2.800l2 6 1.200-4.400 3-1zM7 20L19 8l-4-.5.300-2L22 6l.500 6.700-2-.300-.300-3.400L8.500 21.500z" fill="#5f6368"/></svg><svg style="left:1611.0px;top:362.0px" width="14" height="8" viewBox="0 0 14 8" ><path d="M0 0h14l-7 8z" fill="#5f6368"/></svg><div class="sep" style="left:1640px"></div><svg style="left:1653.0px;top:347.0px" width="36" height="36" viewBox="0 0 24 24" ><path d="M3.900 12a3.100 3.100 0 0 1 3.100-3.100h4V7H7a5 5 0 0 0 0 10h4v-1.900H7A3.100 3.100 0 0 1 3.900 12zM8 13h8v-2H8zm9-6h-4v1.900h4a3.100 3.100 0 0 1 0 6.200h-4V17h4a5 5 0 0 0 0-10z" fill="#5f6368"/></svg><svg style="left:1702.0px;top:350.0px" width="32" height="32" viewBox="0 0 24 24" ><path d="M3 3h18v15H8l-5 4zm2 2v13l2.200-2H19V5zm6 2h2v2.500h2.500v2H13V14h-2v-2.500H8.500v-2H11z" fill="#5f6368"/></svg><svg style="left:1749.0px;top:348.0px" width="34" height="34" viewBox="0 0 24 24" ><path d="M3 3h18v18H3zm2 2v14h14V5zm2 7h2.400v5H7zm3.800-4h2.400v9h-2.400zm3.800 6H17v3h-2.400z" fill="#5f6368"/></svg><svg style="left:1798.0px;top:349.0px" width="32" height="32" viewBox="0 0 24 24" ><path d="M3 4h18l-7 8.500V20h-4v-7.500zm4.300 2l4.700 5.800L16.700 6z" fill="#5f6368"/></svg><svg style="left:1844.0px;top:362.0px" width="14" height="8" viewBox="0 0 14 8" ><path d="M0 0h14l-7 8z" fill="#5f6368"/></svg><div class="t" style="left:1877px;top:346px;font-size:32px;height:38px;line-height:38px;color:#5f6368">Σ</div><svg style="left:1911.0px;top:364.0px" width="14" height="8" viewBox="0 0 14 8" ><path d="M0 0h14l-7 8z" fill="#5f6368"/></svg><div class="sep" style="left:1940px"></div><div class="t" style="left:1958px;top:350px;font-size:32px;font-weight:bold;height:36px;line-height:36px;color:#222">あ</div><svg style="left:2002.0px;top:364.0px" width="14" height="8" viewBox="0 0 14 8" ><path d="M0 0h14l-7 8z" fill="#5f6368"/></svg>
<div style="left:2px;top:397px;width:2874px;height:2px;background:#dfe1e5"></div>
<div class="t" style="left:14px;top:407px;font-size:23.5px;height:24px;line-height:24px;color:#202124">D9</div>
<svg style="left:151px;top:416px" width="12" height="7"><path d="M0 0h12l-6 7z" fill="#5f6368"/></svg>
<div style="left:174px;top:403px;width:2px;height:30px;background:#dcdde0"></div>
<div class="t" style="left:196px;top:400px;font-family:'Liberation Serif',serif;font-style:italic;font-size:31px;height:34px;line-height:34px;color:#b0b3b8">fx</div>
<div style="left:248px;top:403px;width:2px;height:30px;background:#dcdde0"></div>
<div class="t" style="left:266px;top:405px;font-size:21px;letter-spacing:0.5px;height:28px;line-height:28px;color:#202124">小野様、ありがとうございました！</div>
<div style="left:2px;top:437px;width:2874px;height:2px;background:#c9cacd"></div>
<div style="left:2px;top:439px;width:2780px;height:40px;background:#f8f9fa"></div>
<div style="left:2px;top:479px;width:77px;height:1099px;background:#f8f9fa"></div>
<div style="left:660px;top:439px;width:1179px;height:40px;background:#e8eaed"></div>
<div style="left:2px;top:1207px;width:77px;height:224px;background:#e3e4e8"></div>
<div style="left:71px;top:439px;width:8px;height:40px;background:#bcbcbc"></div>
<div style="left:2px;top:472px;width:77px;height:7px;background:#bcbcbc"></div>
<div class="gh" style="left:2px;top:478px;width:2780px"></div>
<div class="gh" style="left:2px;top:838px;width:2780px"></div>
<div class="gh" style="left:2px;top:1035px;width:2780px"></div>
<div class="gh" style="left:2px;top:1206px;width:2780px"></div>
<div class="gh" style="left:2px;top:1430px;width:2780px"></div>
<div class="gh" style="left:2px;top:1466px;width:2780px"></div>
<div class="gh" style="left:2px;top:1501px;width:2780px"></div>
<div class="gh" style="left:2px;top:1537px;width:2780px"></div>
<div class="gh" style="left:2px;top:1572px;width:2780px"></div>
<div class="gh" style="left:2px;top:1577px;width:2780px;background:#d9d9d9"></div>
<div class="gv" style="left:78px;top:439px;height:1139px"></div>
<div class="gv" style="left:248px;top:439px;height:1139px"></div>
<div class="gv" style="left:419px;top:439px;height:1139px"></div>
<div class="gv" style="left:658px;top:439px;height:1139px"></div>
<div class="gv" style="left:1838px;top:439px;height:1139px"></div>
<div class="gv" style="left:2009px;top:439px;height:1139px"></div>
<div class="gv" style="left:2179px;top:439px;height:1139px"></div>
<div class="gv" style="left:2350px;top:439px;height:1139px"></div>
<div class="gv" style="left:2520px;top:439px;height:1139px"></div>
<div class="gv" style="left:2691px;top:439px;height:1139px"></div>
<div style="left:2px;top:478px;width:2780px;height:2px;background:#c4c5c8"></div>
<div style="left:78px;top:439px;width:2px;height:40px;background:#c4c5c8"></div>
<div style="left:248px;top:439px;width:2px;height:40px;background:#c4c5c8"></div>
<div style="left:419px;top:439px;width:2px;height:40px;background:#c4c5c8"></div>
<div style="left:658px;top:439px;width:2px;height:40px;background:#c4c5c8"></div>
<div style="left:1838px;top:439px;width:2px;height:40px;background:#c4c5c8"></div>
<div style="left:2009px;top:439px;width:2px;height:40px;background:#c4c5c8"></div>
<div style="left:2179px;top:439px;width:2px;height:40px;background:#c4c5c8"></div>
<div style="left:2350px;top:439px;width:2px;height:40px;background:#c4c5c8"></div>
<div style="left:2520px;top:439px;width:2px;height:40px;background:#c4c5c8"></div>
<div style="left:2691px;top:439px;width:2px;height:40px;background:#c4c5c8"></div>
<div style="left:78px;top:479px;width:2px;height:1099px;background:#c9cacd"></div>
<div style="left:2px;top:838px;width:77px;height:2px;background:#d5d6d9"></div>
<div style="left:2px;top:1035px;width:77px;height:2px;background:#d5d6d9"></div>
<div style="left:2px;top:1206px;width:77px;height:2px;background:#d5d6d9"></div>
<div style="left:2px;top:1430px;width:77px;height:2px;background:#d5d6d9"></div>
<div style="left:2px;top:1466px;width:77px;height:2px;background:#d5d6d9"></div>
<div style="left:2px;top:1501px;width:77px;height:2px;background:#d5d6d9"></div>
<div style="left:2px;top:1537px;width:77px;height:2px;background:#d5d6d9"></div>
<div style="left:2px;top:1572px;width:77px;height:2px;background:#d5d6d9"></div>
<div class="ch" style="left:79px;width:170px">A</div>
<div class="ch" style="left:249px;width:171px">B</div>
<div class="ch" style="left:420px;width:239px">C</div>
<div class="ch" style="left:659px;width:1180px">D</div>
<div class="ch" style="left:1839px;width:171px">E</div>
<div class="ch" style="left:2010px;width:170px">F</div>
<div class="ch" style="left:2180px;width:171px">G</div>
<div class="rh" style="top:647.0px">6</div>
<div class="rh" style="top:925.5px">7</div>
<div class="rh" style="top:1109.5px">8</div>
<div class="rh" style="top:1307.0px">9</div>
<div class="rh" style="top:1437.0px">10</div>
<div class="rh" style="top:1472.5px">11</div>
<div class="rh" style="top:1508.0px">12</div>
<div class="rh" style="top:1543.5px">13</div>
<div class="hl" style="left:79px;top:838px;width:1761px"></div>
<div class="hl" style="left:79px;top:1035px;width:1761px"></div>
<div class="hl" style="left:79px;top:1206px;width:1761px"></div>
<div class="hl" style="left:79px;top:1430px;width:1761px"></div>
<div class="hl" style="left:79px;top:1466px;width:1761px"></div>
<div class="hl" style="left:79px;top:1501px;width:1761px"></div>
<div class="hl" style="left:79px;top:1537px;width:1761px"></div>
<div class="hl" style="left:79px;top:1572px;width:1761px"></div>
<div class="vl" style="left:248px;top:479px;height:1099px"></div>
<div class="vl" style="left:419px;top:479px;height:1099px"></div>
<div class="vl" style="left:658px;top:479px;height:1099px"></div>
<div class="vl" style="left:1838px;top:479px;height:1099px"></div>
<div class="cell j" style="left:85px;top:646.0px;width:112.5px;font-size:22px;">１１：００</div>
<div class="cell j" style="left:254px;top:646.0px;width:45.0px;font-size:22px;">司会</div>
<div class="cell j" style="left:425px;top:646.0px;width:90.0px;font-size:22px;">概要説明</div>
<div class="cell j" style="left:85px;top:924.5px;width:112.5px;font-size:22px;">１１：０２</div>
<div class="cell j" style="left:254px;top:924.5px;width:67.5px;font-size:22px;">小野様</div>
<div class="cell j" style="left:425px;top:924.5px;width:90.0px;font-size:22px;">自己紹介</div>
<div class="cell j" style="left:85px;top:1108.5px;width:112.5px;font-size:22px;">１１：０７</div>
<div class="cell j" style="left:254px;top:1108.5px;width:67.5px;font-size:22px;">小野様</div>
<div class="cell j" style="left:425px;top:1108.5px;width:67.5px;font-size:22px;">勉強会</div>
<div class="cell j" style="left:85px;top:1306.0px;width:112.5px;font-size:22px;">１１：３２</div>
<div class="cell j" style="left:254px;top:1306.0px;width:45.0px;font-size:22px;">司会</div>
<div class="cell j" style="left:425px;top:1306.0px;width:112.5px;font-size:22px;">感想・質問</div>
<div class="cell j" style="left:254px;top:1437px;width:67.5px;font-size:22px;">小野様</div>
<div class="cell j" style="left:425px;top:1472px;width:90.0px;font-size:22px;">予備質問</div>
<div class="cell j" style="left:425px;top:1508px;width:45.0px;font-size:22px;">回答</div>
<div class="cell j" style="left:425px;top:1543px;width:90.0px;font-size:22px;">予備質問</div>
<div class="cell j" style="left:664px;top:484px;width:202.5px;font-size:22px;">皆様、こんにちは！</div>
<div class="cell j" style="left:664px;top:511px;width:697.5px;font-size:22px;">本日はお休みのところご参加ご視聴いただきありがとうございます！</div>
<div class="cell j" style="left:664px;top:538px;width:1057.5px;font-size:22px;">それでは、お時間となりましたので、再生可能エネルギーオンライン勉強会を開催させていただきます！</div>
<div class="cell j" style="left:664px;top:565px;width:787.5px;font-size:22px;">本日司会を務めさせていただきます公益社団法人東京青年会議所　共生政策室</div>
<div class="cell" style="left:1476.0px;top:566px;font-size:14px;letter-spacing:1.2px;color:#333">○○</div>
<div class="cell j" style="left:1502.0px;top:565px;width:315.0px;font-size:22px;">と申します、どうぞよろしくお</div>
<div class="cell j" style="left:664px;top:592px;width:180.0px;font-size:22px;">願いいたします！</div>
<div class="cell j" style="left:664px;top:646px;width:1147.5px;font-size:22px;">こちらの勉強会は、環境問題に配慮しなければいけないのはわかっているけれどなにをすればいいんだろう、地球</div>
<div class="cell j" style="left:664px;top:673px;width:1147.5px;font-size:22px;">温暖化が進むと今後どうなってしまうんだろう、地球温暖化と私たちが使っている電気・エネルギーはどう関係し</div>
<div class="cell j" style="left:664px;top:700px;width:1125.0px;font-size:22px;">ているのか、私たちひとりひとりができることとはなにか、ということを学んでいただくための勉強会となりま</div>
<div class="cell j" style="left:664px;top:727px;width:45.0px;font-size:22px;">す！</div>
<div class="cell j" style="left:664px;top:781px;width:1147.5px;font-size:22px;">そして、本日講師を務めていただくのは、株式会社ボーダレス・ジャパン　ハチドリ電力事業統括　小野悠希（お</div>
<div class="cell j" style="left:664px;top:808px;width:607.5px;font-size:22px;">のゆうき）さんです、小野さんよろしくお願いいたします！</div>
<div class="cell j" style="left:664px;top:843px;width:202.5px;font-size:22px;">皆様、こんにちは！</div>
<div class="cell j" style="left:664px;top:870px;width:1125.0px;font-size:22px;">株式会社ボーダレス・ジャパン　ハチドリ電力事業統括　小野悠希です、本日はどうぞよろしくお願いいたしま</div>
<div class="cell j" style="left:664px;top:897px;width:45.0px;font-size:22px;">す！</div>
<div class="cell j" style="left:664px;top:924px;width:427.5px;font-size:22px;">まずは、自己紹介をさせていただきます！</div>
<div class="cell" style="left:664px;top:951px;font-size:22px;">～</div>
<div class="cell" style="left:664px;top:978px;font-size:22px;">～</div>
<div class="cell" style="left:664px;top:1005px;font-size:22px;">～</div>
<div class="cell j" style="left:664px;top:1041px;width:900.0px;font-size:22px;">それでは、これから再生可能エネルギーオンライン勉強会をはじめさせていただきます！</div>
<div class="cell j" style="left:664px;top:1068px;width:157.5px;font-size:22px;">まずは・・・・</div>
<div class="cell" style="left:664px;top:1095px;font-size:22px;">～</div>
<div class="cell" style="left:664px;top:1122px;font-size:22px;">～</div>
<div class="cell" style="left:664px;top:1149px;font-size:22px;">～</div>
<div class="cell j" style="left:664px;top:1176px;width:427.5px;font-size:22px;">ご清聴いただきありがとうございました！</div>
<div class="cell j" style="left:664px;top:1211px;width:360.0px;font-size:22px;">小野様、ありがとうございました！</div>
<div class="cell j" style="left:664px;top:1238px;width:1125.0px;font-size:22px;">地球温暖化や温室効果ガスのことは認識しておりましたが、このような関係性があるのは非常に勉強になりまし</div>
<div class="cell j" style="left:664px;top:1265px;width:45.0px;font-size:22px;">た！</div>
<div class="cell j" style="left:664px;top:1292px;width:1125.0px;font-size:22px;">また、私たちが使っている電気も再生可能エネルギーに変えるという小さな一歩が非常に重要だな、と感じまし</div>
<div class="cell j" style="left:664px;top:1319px;width:45.0px;font-size:22px;">た！</div>
<div class="cell j" style="left:664px;top:1373px;width:1147.5px;font-size:22px;">このあと質問に移りたいと思うのですが、まず私から質問させていただきたいのですが、再生可能エネルギーに変</div>
<div class="cell j" style="left:664px;top:1400px;width:540.0px;font-size:22px;">えることによって何か手間とかはあるのでしょうか？</div>
<div class="cell j" style="left:664px;top:1436px;width:45.0px;font-size:22px;">回答</div>
<div style="left:658px;top:1206px;width:1182px;height:226px;border:3px solid #2f6fe0"></div>
<div style="left:1834px;top:1426px;width:11px;height:11px;background:#2f6fe0;border:1px solid #fff"></div>
<div style="left:2px;top:1579px;width:2780px;height:20px;background:#fff"></div>
<div style="left:80px;top:1581px;width:1237px;height:15px;border-radius:8px;background:#dadbdf"></div>
<div style="left:2px;top:1578px;width:77px;height:21px;background:#f8f9fa;border-right:2px solid #d5d6d9"></div>
<div style="left:2762px;top:1550px;width:21px;height:49px;background:#f8f9fa;border-left:2px solid #dcdcdc;border-right:2px solid #dcdcdc"></div>
<svg style="left:2767px;top:1561px" width="11" height="6"><path d="M0 0h11l-5.500 6z" fill="#80868b"/></svg>
<div style="left:2709px;top:1578px;width:53px;height:21px;background:#f8f9fa;border:2px solid #dcdcdc"></div>
<div style="left:2735px;top:1578px;width:2px;height:21px;background:#dcdcdc"></div>
<svg style="left:2718px;top:1583px" width="6" height="11"><path d="M6 0v11L0 5.500z" fill="#80868b"/></svg>
<svg style="left:2747px;top:1583px" width="6" height="11"><path d="M0 0v11l6-5.500z" fill="#80868b"/></svg>
<div style="left:2px;top:1599px;width:2570px;height:66px;background:#f1f2f5"></div>
<svg style="left:85px;top:1620px" width="22" height="22"><path d="M11 2v18M2 11h18" stroke="#5f6368" stroke-width="3" fill="none"/></svg>
<svg style="left:137px;top:1620px" width="22" height="22"><path d="M1 3h20M1 8.500h20M1 14h20M1 19.500h20" stroke="#5f6368" stroke-width="3" fill="none"/></svg>
<div style="left:199px;top:1599px;width:253px;height:66px;background:#fff;box-shadow:0 0 3px rgba(0,0,0,.18)"></div>
<div class="t" style="left:225px;top:1617px;font-size:23px;height:30px;line-height:30px;color:#218a4d;letter-spacing:1px">勉強会シナリオ</div>
<svg style="left:409px;top:1627px" width="14" height="8"><path d="M0 0h14l-7 8z" fill="#218a4d"/></svg>
<div class="t" style="left:479px;top:1617px;font-size:23px;letter-spacing:1.3px;height:30px;line-height:30px;color:#80868b">区行政情報</div>
<svg style="left:614px;top:1627px" width="14" height="8"><path d="M0 0h14l-7 8z" fill="#80868b"/></svg>
<div style="left:655px;top:1604px;width:2px;height:56px;background:#e4e5e8"></div>
<div class="t" style="left:682px;top:1617px;font-size:23px;letter-spacing:0.85px;height:30px;line-height:30px;color:#80868b">脱炭素／カーボンニュートラル取り組み企業</div>
<svg style="left:1181px;top:1627px" width="14" height="8"><path d="M0 0h14l-7 8z" fill="#80868b"/></svg>
<div style="left:2572px;top:1599px;width:211px;height:66px;background:#fff;border-left:2px solid #e0e0e0;border-right:2px solid #e0e0e0"></div>
<svg style="left:2593px;top:1616px" width="31" height="36" viewBox="0 0 31 36"><path d="M3 0h25a3 3 0 0 1 3 3v25a3 3 0 0 1-3 3H19l-3.500 4L12 31H3a3 3 0 0 1-3-3V3a3 3 0 0 1 3-3z" fill="#3b9f5b"/><path d="M15.500 6c1 5.500 3.500 8 9 9.500-5.500 1.500-8 4-9 9.500-1-5.500-3.500-8-9-9.500 5.500-1.500 8-4 9-9.500z" fill="#fff"/></svg>
<div class="t" style="left:2647px;top:1620px;font-size:20.3px;height:26px;line-height:26px;color:#2a8c4f">データ探索</div>
<svg style="left:2822px;top:1607px" width="14" height="22"><path d="M2 2l9 9-9 9" stroke="#5f6368" stroke-width="3" fill="none"/></svg>
<div style="left:0;top:1665px;width:2876px;height:75px;background:#35343a"></div>
<div style="left:0;top:1740px;width:2880px;height:23px;background:#000"></div>
<div style="left:0;top:1763px;width:2880px;height:37px;background:#121212"></div>
<svg style="left:38px;top:1700px" width="22" height="27" viewBox="0 0 22 27"><path d="M0 2h22v25H0z" fill="#e9d98a"/><path d="M8 0h6v27H8z" fill="#c9b25a"/><path d="M9 3h4v3H9zm0 6h4v3H9zm0 6h4v3H9zm0 6h4v3H9z" fill="#7a6a3a"/></svg>
<div class="t" style="left:84px;top:1700px;font-size:22px;height:28px;line-height:28px;color:#e8e8ea;letter-spacing:-.3px">21_0304第3回大田....zip</div>
<svg style="left:353px;top:1707px" width="18" height="11"><path d="M1.500 10L9 2.500 16.500 10" stroke="#c6c6ca" stroke-width="2.600" fill="none"/></svg>
<div style="left:400px;top:1678px;width:2px;height:62px;background:#55545a"></div>
<svg style="left:433px;top:1700px" width="19" height="25" viewBox="0 0 19 25"><path d="M0 0h13l6 6v19H0z" fill="#f6ecec"/><path d="M4 18c3-2 5-6 5-9 0-1.500 1.500-1.500 1.500 0 0 3.500 3 6 6 7-4-.5-8 0-12.500 2z" stroke="#d22" stroke-width="1.500" fill="none"/></svg>
<div class="t" style="left:477px;top:1700px;font-size:22px;height:28px;line-height:28px;color:#e8e8ea;letter-spacing:-4.000px">3月例会ディスカッシ<span style="position:static;letter-spacing:-0.3px">....pdf</span></div>
<svg style="left:745px;top:1707px" width="18" height="11"><path d="M1.500 10L9 2.500 16.500 10" stroke="#c6c6ca" stroke-width="2.600" fill="none"/></svg>
<div style="left:793px;top:1678px;width:2px;height:62px;background:#55545a"></div>
<div style="left:2673px;top:1688px;width:141px;height:52px;border-radius:6px;background:#2a292e"></div>
<div class="t" style="left:2698px;top:1700px;font-size:21px;height:28px;line-height:28px;color:#9aa5f4;font-weight:bold;letter-spacing:-4.200px">すべて表示</div>
<svg style="left:2836.0px;top:1703.0px" width="20" height="20" viewBox="0 0 20 20" ><path d="M2 2L18 18M18 2L2 18" stroke="#d8d8dc" stroke-width="2.6" fill="none"/></svg>
<div style="left:2392px;top:159px;width:488px;height:1391px;background:#131313;box-shadow:-6px 6px 22px rgba(0,0,0,.35)"></div><div style="left:2392px;top:716px;width:488px;height:278px;background:linear-gradient(180deg,#e8ee8e 0%,#9fca5c 30%,#86bf4c 55%,#cfe27c 90%,#e3ec8a 100%)"></div><svg style="left:2396px;top:164px" width="480" height="270" viewBox="0 0 480 270"><g transform="scale(0.20253) translate(-30,-30)"><defs><linearGradient id="ga1" x1="0" y1="0" x2="0.25" y2="1"><stop offset="0" stop-color="#e4f7f9"/><stop offset="0.75" stop-color="#ffffff"/></linearGradient>
<linearGradient id="gb1" x1="0" y1="0" x2="0.3" y2="1"><stop offset="0" stop-color="#d8f0f2"/><stop offset="1" stop-color="#eefafb"/></linearGradient>
<linearGradient id="gc1" x1="0" y1="0" x2="0.2" y2="1"><stop offset="0" stop-color="#c4e4e7"/><stop offset="1" stop-color="#d6eef0"/></linearGradient>
<filter id="bl1" x="-10%" y="-10%" width="120%" height="120%"><feGaussianBlur stdDeviation="7"/></filter>
<filter id="bs1" x="-10%" y="-10%" width="120%" height="120%"><feGaussianBlur stdDeviation="3"/></filter></defs>
<rect x="30" y="30" width="2370" height="1332" fill="url(#gc1)"/>
<polygon points="30,30 480,30 1300,1362 30,1362" fill="url(#ga1)"/>
<polygon points="480,30 770,30 1560,1362 1300,1362" fill="url(#gb1)"/>
<polygon points="770,30 1875,30 1995,395 1380,215" fill="#abd5d8"/>
<polygon points="1875,30 2400,30 2400,1362 2325,1362" fill="#fcffff"/>
<polygon points="1995,395 2325,1362 2120,1362" fill="#93c7cc"/><g opacity="1.0"><text x="115" y="203" font-family="Liberation Sans, sans-serif" font-weight="bold" font-size="88" fill="#6db0b4" textLength="232" lengthAdjust="spacingAndGlyphs">YOU CAN</text>
<text x="350" y="215" font-family="Liberation Serif, serif" font-style="italic" font-size="150" fill="#6db0b4" textLength="350" lengthAdjust="spacingAndGlyphs">Create</text>
<text x="115" y="348" font-family="Liberation Sans, sans-serif" font-weight="bold" font-size="172" fill="#6db0b4" textLength="620" lengthAdjust="spacingAndGlyphs">THE WORLD</text>
<text x="115" y="422" font-family="Liberation Sans, sans-serif" font-size="34" fill="#8dbfc3" textLength="600" lengthAdjust="spacingAndGlyphs">未来を構想し、新たな世界を東京から</text></g><text x="1965" y="193" font-family="Liberation Sans, sans-serif" font-weight="bold" font-style="italic" font-size="150" fill="#2e7fd3" textLength="245" lengthAdjust="spacingAndGlyphs">JCI</text>
<path d="M2283 78c18 8 32 10 47 10 3 50-10 88-47 112-37-24-50-62-47-112 15 0 29-2 47-10z" fill="none" stroke="#3a86d6" stroke-width="13"/>
<circle cx="2283" cy="135" r="14" fill="#7fb3e6"/>
<text x="2085" y="252" font-family="Liberation Sans, sans-serif" font-weight="bold" font-size="62" fill="#e07a1f" textLength="162" lengthAdjust="spacingAndGlyphs">Tokyo</text><polygon points="1700,560 2000,560 2240,1362 1900,1362" fill="#d5edf0" opacity=".8"/><g filter="url(#bs1)"><rect x="1240" y="30" width="410" height="60" fill="#efe6c8"/><path d="M590 1362C640 1180 740 1000 800 880 920 800 1080 770 1190 735L1660 830C1760 900 1900 990 1950 1080 2000 1180 2030 1280 2040 1362Z" fill="#23262f"/><path d="M1560 900C1640 950 1700 1020 1720 1080 1700 1200 1600 1300 1560 1362L2040 1362C2030 1280 2000 1180 1950 1080 1900 990 1760 900 1660 830Z" fill="#2a2e44"/><path d="M1215 830L1570 905 1590 1080 1500 1362 1250 1362 1240 1100Z" fill="#f1f2f6"/><path d="M1300 1075L1440 1040 1485 1065 1400 1190 1430 1362 1285 1362 1340 1180Z" fill="#2b4784"/><path d="M1110 470C1090 520 1110 600 1150 640L1200 760 1250 900 1560 905 1640 760 1720 600C1770 560 1780 500 1750 470L1700 400 1150 400Z" fill="#e3c0a6"/><ellipse cx="1690" cy="545" rx="55" ry="50" fill="#f0d4bd"/><path d="M1135 530C1180 580 1250 610 1330 610 1400 600 1440 600 1500 610 1600 625 1680 600 1740 560L1700 640C1690 760 1640 860 1560 905 1500 945 1470 955 1430 955 1350 930 1270 880 1225 800 1195 740 1180 640 1135 530Z" fill="#1b2242"/><ellipse cx="1325" cy="510" rx="55" ry="14" fill="#5a4038"/><ellipse cx="1590" cy="515" rx="55" ry="14" fill="#5a4038"/><path d="M1090 480C1070 330 1100 180 1200 90 1300 30 1420 25 1530 40 1660 70 1760 200 1780 330 1790 420 1760 480 1740 520 1730 440 1700 420 1640 440 1560 400 1500 420 1440 450 1360 400 1300 400 1240 420 1180 430 1160 470 1150 540Z" fill="#1d1b20"/><path d="M1300 130C1450 90 1620 170 1710 330" stroke="#3d383f" stroke-width="40" fill="none" opacity=".7"/><path d="M1180 300C1200 200 1280 130 1360 110" stroke="#34303a" stroke-width="30" fill="none" opacity=".6"/><path d="M1140 540C1200 590 1280 612 1340 612 1420 600 1480 602 1540 612 1620 622 1690 598 1738 562" stroke="#2a3258" stroke-width="14" fill="none"/></g></g></svg><svg style="left:2396px;top:442px" width="480" height="270" viewBox="0 0 480 270"><g transform="scale(0.20253) translate(-30,-30)"><defs><linearGradient id="ga2" x1="0" y1="0" x2="0.25" y2="1"><stop offset="0" stop-color="#dff5f7"/><stop offset="1" stop-color="#d8f1f3"/></linearGradient>
<linearGradient id="gb2" x1="0" y1="0" x2="0.3" y2="1"><stop offset="0" stop-color="#cbe9ec"/><stop offset="1" stop-color="#cdeaed"/></linearGradient>
<linearGradient id="gc2" x1="0" y1="0" x2="0.2" y2="1"><stop offset="0" stop-color="#b9dfe1"/><stop offset="1" stop-color="#bfe2e5"/></linearGradient>
<filter id="bl2" x="-10%" y="-10%" width="120%" height="120%"><feGaussianBlur stdDeviation="7"/></filter>
<filter id="bs2" x="-10%" y="-10%" width="120%" height="120%"><feGaussianBlur stdDeviation="3"/></filter></defs>
<rect x="30" y="30" width="2370" height="1332" fill="url(#gc2)"/>
<polygon points="30,30 480,30 1300,1362 30,1362" fill="url(#ga2)"/>
<polygon points="480,30 770,30 1560,1362 1300,1362" fill="url(#gb2)"/>
<polygon points="770,30 1875,30 1995,395 1380,215" fill="#a1cfd1"/>
<polygon points="1875,30 2400,30 2400,1362 2325,1362" fill="#fcffff"/>
<polygon points="1995,395 2325,1362 2120,1362" fill="#90c4c9"/><g opacity="0.9"><text x="115" y="203" font-family="Liberation Sans, sans-serif" font-weight="bold" font-size="88" fill="#6db0b4" textLength="232" lengthAdjust="spacingAndGlyphs">YOU CAN</text>
<text x="350" y="215" font-family="Liberation Serif, serif" font-style="italic" font-size="150" fill="#6db0b4" textLength="350" lengthAdjust="spacingAndGlyphs">Create</text>
<text x="115" y="348" font-family="Liberation Sans, sans-serif" font-weight="bold" font-size="172" fill="#6db0b4" textLength="620" lengthAdjust="spacingAndGlyphs">THE WORLD</text>
<text x="115" y="422" font-family="Liberation Sans, sans-serif" font-size="34" fill="#8dbfc3" textLength="600" lengthAdjust="spacingAndGlyphs">未来を構想し、新たな世界を東京から</text></g><text x="1965" y="207" font-family="Liberation Sans, sans-serif" font-weight="bold" font-style="italic" font-size="150" fill="#2e7fd3" textLength="245" lengthAdjust="spacingAndGlyphs">JCI</text>
<path d="M2283 92c18 8 32 10 47 10 3 50-10 88-47 112-37-24-50-62-47-112 15 0 29-2 47-10z" fill="none" stroke="#3a86d6" stroke-width="13"/>
<circle cx="2283" cy="149" r="14" fill="#7fb3e6"/>
<text x="2085" y="266" font-family="Liberation Sans, sans-serif" font-weight="bold" font-size="62" fill="#e07a1f" textLength="162" lengthAdjust="spacingAndGlyphs">Tokyo</text><g filter="url(#bl2)"><path d="M30 1130L350 1250 640 1362 30 1362Z" fill="#cdd3d4"/><path d="M560 1362L700 1150 900 1060 880 1200 800 1362Z" fill="#dfe5e7"/><path d="M810 1362L870 1180 905 1055C980 1110 1050 1150 1130 1170L1540 1210C1610 1250 1650 1300 1670 1362Z" fill="#141828"/><path d="M30 540L300 520 600 620 780 760 800 950 900 1060 700 1200 520 1300 330 1285 150 1240 30 1150Z" fill="#8d665f"/><ellipse cx="500" cy="930" rx="190" ry="190" fill="#a27a72"/><ellipse cx="260" cy="1050" rx="110" ry="40" fill="#7c4f4b"/><path d="M30 330C150 240 330 195 470 205 640 215 780 290 870 420 950 540 990 700 1000 900 1000 980 960 1050 920 1085 880 1000 840 940 800 900 790 800 740 740 640 690 520 640 400 640 320 590 250 530 120 560 30 600Z" fill="#2c2631"/></g><g filter="url(#bs2)"><path d="M30 720L140 700 230 640 440 630 450 720" stroke="#3a2e34" stroke-width="16" fill="none"/><path d="M800 740C790 860 740 960 690 1060 650 1160 610 1260 590 1362" stroke="#e4dcd6" stroke-width="9" fill="none"/></g></g></svg><svg style="left:2396px;top:720px" width="480" height="270" viewBox="0 0 480 270"><g transform="scale(0.20253) translate(-30,-30)"><defs><linearGradient id="ga3" x1="0" y1="0" x2="0.25" y2="1"><stop offset="0" stop-color="#e8f9fa"/><stop offset="0.75" stop-color="#ffffff"/></linearGradient>
<linearGradient id="gb3" x1="0" y1="0" x2="0.3" y2="1"><stop offset="0" stop-color="#dcf2f4"/><stop offset="1" stop-color="#eefafb"/></linearGradient>
<linearGradient id="gc3" x1="0" y1="0" x2="0.2" y2="1"><stop offset="0" stop-color="#c6e5e8"/><stop offset="1" stop-color="#d3ecef"/></linearGradient>
<filter id="bl3" x="-10%" y="-10%" width="120%" height="120%"><feGaussianBlur stdDeviation="7"/></filter>
<filter id="bs3" x="-10%" y="-10%" width="120%" height="120%"><feGaussianBlur stdDeviation="3"/></filter></defs>
<rect x="30" y="30" width="2370" height="1332" fill="url(#gc3)"/>
<polygon points="30,30 480,30 1300,1362 30,1362" fill="url(#ga3)"/>
<polygon points="480,30 770,30 1560,1362 1300,1362" fill="url(#gb3)"/>
<polygon points="770,30 1875,30 1995,395 1380,215" fill="#b4dadd"/>
<polygon points="1875,30 2400,30 2400,1362 2325,1362" fill="#fcffff"/>
<polygon points="1995,395 2325,1362 2120,1362" fill="#9ccbd0"/><g opacity="1.0"><text x="115" y="203" font-family="Liberation Sans, sans-serif" font-weight="bold" font-size="88" fill="#6db0b4" textLength="232" lengthAdjust="spacingAndGlyphs">YOU CAN</text>
<text x="350" y="215" font-family="Liberation Serif, serif" font-style="italic" font-size="150" fill="#6db0b4" textLength="350" lengthAdjust="spacingAndGlyphs">Create</text>
<text x="115" y="348" font-family="Liberation Sans, sans-serif" font-weight="bold" font-size="172" fill="#6db0b4" textLength="620" lengthAdjust="spacingAndGlyphs">THE WORLD</text>
<text x="115" y="422" font-family="Liberation Sans, sans-serif" font-size="34" fill="#8dbfc3" textLength="600" lengthAdjust="spacingAndGlyphs">未来を構想し、新たな世界を東京から</text></g><text x="1965" y="193" font-family="Liberation Sans, sans-serif" font-weight="bold" font-style="italic" font-size="150" fill="#2e7fd3" textLength="245" lengthAdjust="spacingAndGlyphs">JCI</text>
<path d="M2283 78c18 8 32 10 47 10 3 50-10 88-47 112-37-24-50-62-47-112 15 0 29-2 47-10z" fill="none" stroke="#3a86d6" stroke-width="13"/>
<circle cx="2283" cy="135" r="14" fill="#7fb3e6"/>
<text x="2085" y="252" font-family="Liberation Sans, sans-serif" font-weight="bold" font-size="62" fill="#e07a1f" textLength="162" lengthAdjust="spacingAndGlyphs">Tokyo</text><polygon points="1500,500 1990,400 2325,1362 1700,1362" fill="#d4ecef" opacity=".7"/><g filter="url(#bs3)"><path d="M1390 1362L1400 1180 1440 1100C1600 1170 1800 1200 1960 1240 2020 1280 2050 1320 2060 1362Z" fill="#1a2038"/><path d="M1360 1362L1385 1200 1400 1362Z" fill="#e8ecf0"/><path d="M1400 800C1430 720 1500 720 1530 790 1550 880 1530 1000 1470 1070 1440 1090 1410 1070 1400 1020Z" fill="#d0766a"/><ellipse cx="1435" cy="960" rx="28" ry="60" fill="#f4f2f0"/><path d="M410 760C440 640 560 540 760 520L1200 520C1300 560 1360 700 1390 860L1400 1100 1380 1362 700 1362 560 1220 470 1080Z" fill="#cf9f96"/><ellipse cx="850" cy="820" rx="360" ry="170" fill="#ddb2a6"/><path d="M460 1010C560 1000 640 1020 700 1060" stroke="#3a2522" stroke-width="26" fill="none"/><path d="M860 1010C960 960 1060 930 1130 930" stroke="#3a2522" stroke-width="26" fill="none"/><ellipse cx="610" cy="1135" rx="75" ry="30" fill="#2a1a1a"/><ellipse cx="1010" cy="1085" rx="85" ry="32" fill="#2a1a1a"/><path d="M780 1362C830 1290 930 1280 1010 1362Z" fill="#b98078"/><path d="M300 640C270 560 330 470 400 400 420 260 520 130 660 60 780 20 920 30 1040 80 1180 130 1300 230 1380 330 1450 400 1520 440 1530 500 1480 560 1460 640 1430 720 1400 800 1395 880 1390 900 1370 780 1320 660 1220 610 1080 570 900 570 740 590 600 600 480 650 420 780 380 720 330 700 300 640Z" fill="#18161a"/><path d="M1380 330L1480 380 1420 400 1540 480 1440 500 1500 560 1400 600Z" fill="#18161a"/><g stroke="#8f8f96" fill="none" opacity=".55"><path d="M610 120C700 80 800 85 890 130" stroke-width="12"/><path d="M690 210C800 180 900 200 1010 270" stroke-width="12"/><path d="M850 400C950 415 1050 465 1110 525" stroke-width="14"/><path d="M880 440C960 460 1030 500 1080 550" stroke-width="8"/><path d="M560 240C620 205 700 210 760 250" stroke-width="10"/><path d="M930 90C1000 100 1080 140 1140 190" stroke-width="10" stroke-dasharray="30 26"/><path d="M1000 180C1080 200 1160 250 1220 310" stroke-width="10" stroke-dasharray="24 30"/></g></g><rect x="30" y="1165" width="552" height="197" fill="#333333" opacity=".88"/><text x="68" y="1313" font-family="Liberation Sans, sans-serif" font-size="120" fill="#ffffff" textLength="476" lengthAdjust="spacingAndGlyphs">柳田貴裕</text></g></svg><svg style="left:2396px;top:998px" width="480" height="270" viewBox="0 0 480 270"><g transform="scale(0.20253) translate(-30,-30)"><defs><linearGradient id="ga4" x1="0" y1="0" x2="0.25" y2="1"><stop offset="0" stop-color="#e6f8f9"/><stop offset="0.75" stop-color="#ffffff"/></linearGradient>
<linearGradient id="gb4" x1="0" y1="0" x2="0.3" y2="1"><stop offset="0" stop-color="#daf1f3"/><stop offset="1" stop-color="#eefafb"/></linearGradient>
<linearGradient id="gc4" x1="0" y1="0" x2="0.2" y2="1"><stop offset="0" stop-color="#cbe7ea"/><stop offset="1" stop-color="#d9eff1"/></linearGradient>
<filter id="bl4" x="-10%" y="-10%" width="120%" height="120%"><feGaussianBlur stdDeviation="7"/></filter>
<filter id="bs4" x="-10%" y="-10%" width="120%" height="120%"><feGaussianBlur stdDeviation="3"/></filter></defs>
<rect x="30" y="30" width="2370" height="1332" fill="url(#gc4)"/>
<polygon points="30,30 480,30 1300,1362 30,1362" fill="url(#ga4)"/>
<polygon points="480,30 770,30 1560,1362 1300,1362" fill="url(#gb4)"/>
<polygon points="770,30 1875,30 1995,395 1380,215" fill="#b3dadd"/>
<polygon points="1875,30 2400,30 2400,1362 2325,1362" fill="#fcffff"/>
<polygon points="1995,395 2325,1362 2120,1362" fill="#9dccd1"/><g opacity="0.9"><text x="115" y="203" font-family="Liberation Sans, sans-serif" font-weight="bold" font-size="88" fill="#6db0b4" textLength="232" lengthAdjust="spacingAndGlyphs">YOU CAN</text>
<text x="350" y="215" font-family="Liberation Serif, serif" font-style="italic" font-size="150" fill="#6db0b4" textLength="350" lengthAdjust="spacingAndGlyphs">Create</text>
<text x="115" y="348" font-family="Liberation Sans, sans-serif" font-weight="bold" font-size="172" fill="#6db0b4" textLength="620" lengthAdjust="spacingAndGlyphs">THE WORLD</text>
</g><text x="1965" y="207" font-family="Liberation Sans, sans-serif" font-weight="bold" font-style="italic" font-size="150" fill="#2e7fd3" textLength="245" lengthAdjust="spacingAndGlyphs">JCI</text>
<path d="M2283 92c18 8 32 10 47 10 3 50-10 88-47 112-37-24-50-62-47-112 15 0 29-2 47-10z" fill="none" stroke="#3a86d6" stroke-width="13"/>
<circle cx="2283" cy="149" r="14" fill="#7fb3e6"/>
<text x="2085" y="266" font-family="Liberation Sans, sans-serif" font-weight="bold" font-size="62" fill="#e07a1f" textLength="162" lengthAdjust="spacingAndGlyphs">Tokyo</text><polygon points="1750,300 1990,400 2325,1362 1900,1362" fill="#d4ecef" opacity=".6"/><g filter="url(#bs4)"><path d="M365 1362C380 1320 470 1260 500 1200 520 1140 540 1100 570 1075L1040 985 1120 1362Z" fill="#121215"/><path d="M1590 1362L1650 1060C1800 1120 2000 1200 2200 1270 2250 1290 2265 1330 2270 1362Z" fill="#131317"/><path d="M1100 1362L1100 1080 1640 1070 1600 1362Z" fill="#ebe9e6"/><path d="M925 600C940 560 990 560 1020 590L1030 820C990 810 960 780 950 740Z" fill="#6b4a3e"/><path d="M1740 590C1780 560 1810 580 1810 640 1800 720 1780 800 1730 830Z" fill="#6b4a3e"/><path d="M1010 520C1030 380 1150 250 1300 230L1600 240C1700 300 1740 430 1745 560L1735 830C1700 980 1640 1120 1560 1220 1480 1290 1330 1290 1250 1240 1150 1150 1060 980 1030 820Z" fill="#86604c"/><ellipse cx="1400" cy="470" rx="260" ry="160" fill="#ae876c"/><ellipse cx="1400" cy="820" rx="110" ry="200" fill="#8f6a58"/><ellipse cx="1380" cy="1180" rx="260" ry="110" fill="#5f4438"/><path d="M1090 560C1160 530 1260 530 1330 570" stroke="#2a1c18" stroke-width="30" fill="none"/><path d="M1480 570C1550 540 1640 540 1700 570" stroke="#2a1c18" stroke-width="30" fill="none"/><path d="M1130 660C1190 690 1260 690 1310 660" stroke="#2a1c18" stroke-width="22" fill="none"/><path d="M1500 670C1560 700 1620 700 1670 670" stroke="#2a1c18" stroke-width="22" fill="none"/><path d="M1270 1040C1340 1010 1440 1010 1520 1040" stroke="#5a3530" stroke-width="34" fill="none"/><path d="M1000 560C960 420 980 240 1060 140 1120 60 1240 30 1380 30L1600 35C1700 80 1780 200 1790 340 1795 440 1770 520 1745 580 1740 470 1700 360 1610 300 1500 270 1380 270 1290 300 1180 350 1080 420 1040 540Z" fill="#16161a"/></g><g filter="url(#bs4)"><path d="M1040 990C1060 1080 1090 1140 1100 1200" stroke="#e8e4e0" stroke-width="8" fill="none"/><path d="M1640 1060C1630 1140 1610 1200 1600 1260" stroke="#e8e4e0" stroke-width="8" fill="none"/></g></g></svg><div style="left:2396px;top:1276px;width:480px;height:270px;background:#232323"></div><div class="t" style="left:2566px;top:1390px;font-size:36.5px;height:42px;line-height:42px;color:#fff;-webkit-text-stroke:0.3px #fff;width:140px;text-align:center">高梨 拡</div>
</div></body></html>
